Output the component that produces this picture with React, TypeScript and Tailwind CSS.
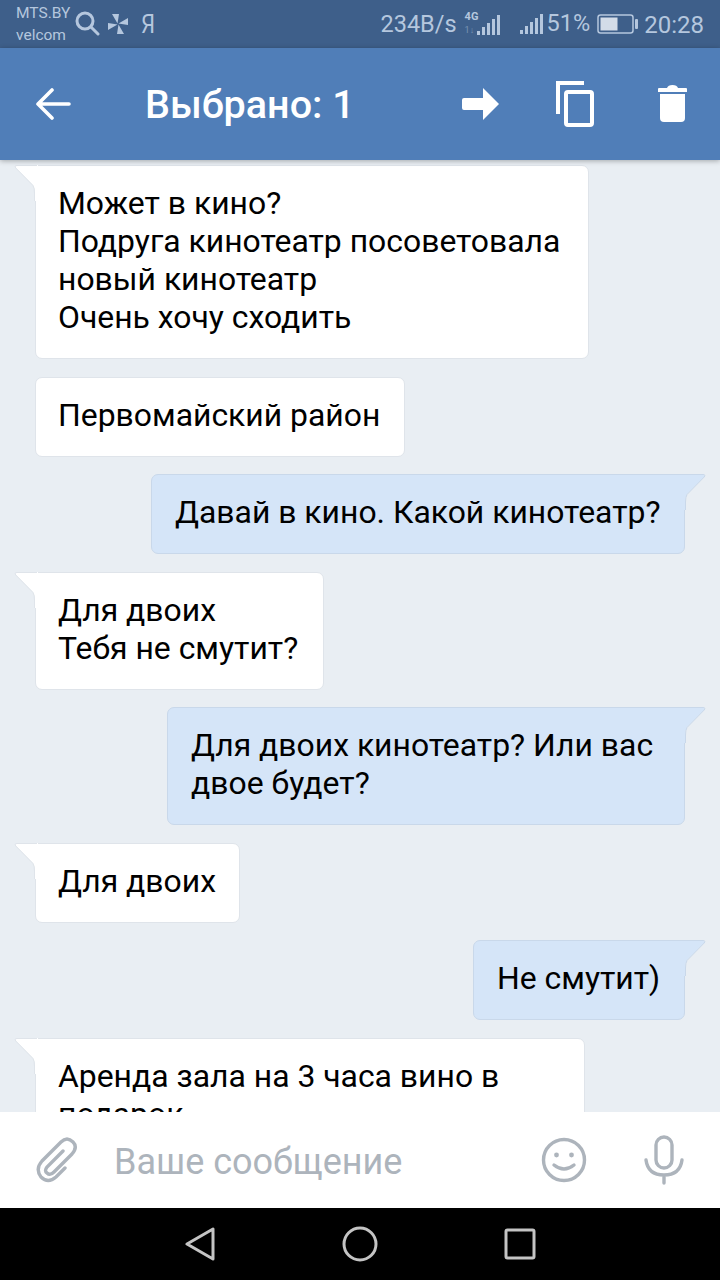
const FONT = "font-['Roboto',sans-serif]"

type Msg = { text: string; mine?: boolean; tail?: boolean; width?: string }

const LeftTail = () => (
  <svg className="absolute left-[-22px] top-[-1px]" width="24" height="36" viewBox="0 0 24 36">
    <path d="M22 1 H3 Q0.5 1 2 3 L19 20 Q21 23 21 28 V36 H24 V0 H22 Z" fill="#fff" />
    <path d="M23 0.5 H3 Q0 0.5 1.8 3 L19 20.5 Q20.5 23 20.5 28 V36" fill="none" stroke="#dfe4ea" strokeWidth="1" />
    <rect x="21" y="1" width="3" height="35" fill="#fff" />
  </svg>
)

const RightTail = () => (
  <svg className="absolute right-[-22px] top-[-1px]" width="23" height="36" viewBox="0 0 23 36">
    <path d="M0 1 H20 Q22.5 1 21 3 L4 20 Q2 23 2 28 V36 H0 Z" fill="#d5e5f8" />
    <path d="M1 0.5 H20 Q23 0.5 21.2 3 L4 20.5 Q2.5 23 2.5 28 V36" fill="none" stroke="#c9d8ea" strokeWidth="1" />
    <rect x="0" y="1" width="2" height="35" fill="#d5e5f8" />
  </svg>
)

const Bubble = ({ text, mine, tail, width }: Msg) => (
  <div
    className={`relative shrink-0 rounded-[7px] border pt-[18px] pb-[22px] text-[31.9px] leading-[38px] whitespace-pre text-black ${
      mine
        ? 'self-end mr-[35px] pl-[23px] pr-[22px] bg-[#d5e5f8] border-[#c9d8ea]'
        : 'self-start ml-[35px] pl-[22px] pr-[24px] bg-white border-[#dfe4ea]'
    } ${tail ? (mine ? 'rounded-tr-none' : 'rounded-tl-none') : ''} ${width ?? ''}`}
  >
    {tail && (mine ? <RightTail /> : <LeftTail />)}
    {text}
  </div>
)

const messages: Msg[] = [
  { text: 'Может в кино?\nПодруга кинотеатр посоветовала\nновый кинотеатр\nОчень хочу сходить', tail: true, width: 'w-[554px]' },
  { text: 'Первомайский район', width: 'w-[370px]' },
  { text: 'Давай в кино. Какой кинотеатр?', mine: true, tail: true, width: 'w-[534px]' },
  { text: 'Для двоих\nТебя не смутит?', tail: true, width: 'w-[289px]' },
  { text: 'Для двоих кинотеатр? Или вас\nдвое будет?', mine: true, tail: true, width: 'w-[518px]' },
  { text: 'Для двоих', tail: true, width: 'w-[205px]' },
  { text: 'Не смутит)', mine: true, tail: true, width: 'w-[212px]' },
  { text: 'Аренда зала на 3 часа вино в\nподарок', tail: true, width: 'w-[550px]' },
]

const Bars = ({ className }: { className?: string }) => (
  <svg className={className} width="24" height="22" viewBox="0 0 24 22" fill="#b5c7de">
    <rect x="0" y="17" width="3" height="4" />
    <rect x="5" y="13" width="3" height="8" />
    <rect x="10" y="9" width="3" height="12" />
    <rect x="15" y="5" width="3" height="16" />
    <rect x="20" y="1" width="3" height="20" />
  </svg>
)

const StatusBar = () => (
  <div className="flex h-12 shrink-0 items-center bg-[#3e5f8a] text-[#b5c7de]">
    <div className="ml-4 flex w-[58px] flex-col text-[15.5px] leading-[22px]">
      <span>MTS.BY</span>
      <span>velcom</span>
    </div>
    <svg className="ml-[1px]" width="25" height="26" viewBox="0 0 25 26" fill="none" stroke="#b5c7de" strokeWidth="3">
      <circle cx="10" cy="10" r="8" />
      <path d="M16 16 L23 23" strokeLinecap="round" />
    </svg>
    <svg className="ml-[7px]" width="22" height="22" viewBox="0 0 22 22" fill="#b5c7de">
      <path d="M10.5 10.5 L5 1 H12 Z M11.5 10.5 L21 5 V12 Z M11.5 11.5 L17 21 H10 Z M10.5 11.5 L1 17 V10 Z" />
    </svg>
    <span className="ml-3 inline-block origin-left scale-x-[0.85] text-[26px] leading-none">Я</span>
    <span className="ml-auto pt-[2px] text-[23.5px] leading-none">234B/s</span>
    <div className="relative ml-[8px] h-[24px] w-[36px]">
      <span className="absolute left-0 top-[-1px] text-[11px] font-bold leading-[12px]">4G</span>
      <span className="absolute left-0 top-[13px] text-[9px] leading-[10px] opacity-50">1↓</span>
      <Bars className="absolute right-0 top-[2px]" />
    </div>
    <Bars className="ml-[19px]" />
    <span className="ml-[3px] text-[23.5px] leading-none">51%</span>
    <svg className="ml-[7px]" width="41" height="20" viewBox="0 0 41 20">
      <rect x="1" y="1" width="35" height="18" rx="2.5" fill="none" stroke="#b5c7de" strokeWidth="1.5" />
      <rect x="3.5" y="3.5" width="17" height="13" fill="#d3dce8" />
      <rect x="38" y="5" width="3" height="10" rx="1" fill="#b5c7de" />
    </svg>
    <span className="ml-[6px] mr-4 pt-[2px] text-[24px] leading-none">20:28</span>
  </div>
)

const Header = () => (
  <div className="z-10 flex h-28 shrink-0 items-center bg-[#507eb8] text-white shadow-[0_1px_5px_rgba(0,0,0,0.3)]">
    <svg className="ml-[36px]" width="35" height="32" viewBox="0 0 35 32" fill="none" stroke="#fff" strokeWidth="3.6" strokeLinecap="round" strokeLinejoin="round">
      <path d="M33 16 H3 M16 2 L2 16 L16 30" />
    </svg>
    <span className="ml-[74px] pt-[2px] text-[39.5px] font-medium leading-none">Выбрано: 1</span>
    <svg className="ml-auto" width="38" height="32" viewBox="0 0 38 32" fill="#fff">
      <path d="M2 10 H21 V0 L37 16 L21 32 V22 H2 Q0 22 0 20 V12 Q0 10 2 10 Z" />
    </svg>
    <svg className="ml-[56px]" width="38" height="46" viewBox="0 0 38 46" fill="none" stroke="#fff" strokeWidth="4">
      <path d="M28 2 H2 V33" />
      <rect x="10" y="11" width="26" height="33" rx="2" />
    </svg>
    <svg className="ml-[64px] mr-[33px]" width="29" height="38" viewBox="0 0 29 38" fill="#fff">
      <path d="M0 4 Q0 3 1 3 H9 Q10 0 14.5 0 Q19 0 20 3 H28 Q29 3 29 4 V7 H0 Z" />
      <path d="M2 9 H27 V33 Q27 37 23 37 H6 Q2 37 2 33 Z" />
    </svg>
  </div>
)

const Composer = () => (
  <div className="z-10 flex h-24 shrink-0 items-center bg-white">
    <svg className="ml-[36px]" width="42" height="46" viewBox="0 0 42 46" fill="none" stroke="#adb4bc" strokeWidth="3.4" strokeLinecap="round">
      <path d="M27 14 L11 30 Q8 34 11 36 Q14 39 18 35 L36 17 Q42 10 37 5 Q31 -1 25 5 L6 24 Q-1 32 5 40 Q12 47 20 40 L29 31" />
    </svg>
    <span className="ml-[36px] pt-[4px] text-[36px] leading-none text-[#adb4bc]">Ваше сообщение</span>
    <svg className="ml-auto" width="46" height="46" viewBox="0 0 46 46" fill="none" stroke="#adb4bc" strokeWidth="3.4">
      <circle cx="23" cy="23" r="20.5" />
      <circle cx="15.5" cy="18" r="2.4" fill="#adb4bc" stroke="none" />
      <circle cx="30.5" cy="18" r="2.4" fill="#adb4bc" stroke="none" />
      <path d="M13 28 Q23 36 33 28" strokeLinecap="round" />
    </svg>
    <svg className="ml-[57px] mr-[36px]" width="40" height="50" viewBox="0 0 40 50" fill="none" stroke="#adb4bc" strokeWidth="3.4" strokeLinecap="round">
      <rect x="12" y="2" width="16" height="31" rx="8" />
      <path d="M2 25 Q4 40 20 40 Q36 40 38 25 M20 40 V48" />
    </svg>
  </div>
)

const NavBar = () => (
  <div className="flex h-[72px] shrink-0 items-center bg-black">
    <svg className="ml-[185px]" width="30" height="34" viewBox="0 0 30 34" fill="none" stroke="#c4c4c4" strokeWidth="3" strokeLinejoin="round">
      <path d="M28 2 V32 L2 17 Z" />
    </svg>
    <svg className="ml-[127px]" width="36" height="36" viewBox="0 0 36 36" fill="none" stroke="#c4c4c4" strokeWidth="3">
      <circle cx="18" cy="18" r="16" />
    </svg>
    <svg className="ml-[126px]" width="32" height="32" viewBox="0 0 32 32" fill="none" stroke="#c4c4c4" strokeWidth="3">
      <rect x="2" y="2" width="28" height="28" rx="1.5" />
    </svg>
  </div>
)

export default function App() {
  return (
    <div className={`${FONT} flex h-[1280px] w-[720px] flex-col overflow-hidden bg-[#e9eef3]`}>
      <StatusBar />
      <Header />
      <div className="flex min-h-0 flex-1 flex-col gap-[17.5px] overflow-hidden pt-[5px]">
        {messages.map((m, i) => (
          <Bubble key={i} {...m} />
        ))}
      </div>
      <Composer />
      <NavBar />
    </div>
  )
}
